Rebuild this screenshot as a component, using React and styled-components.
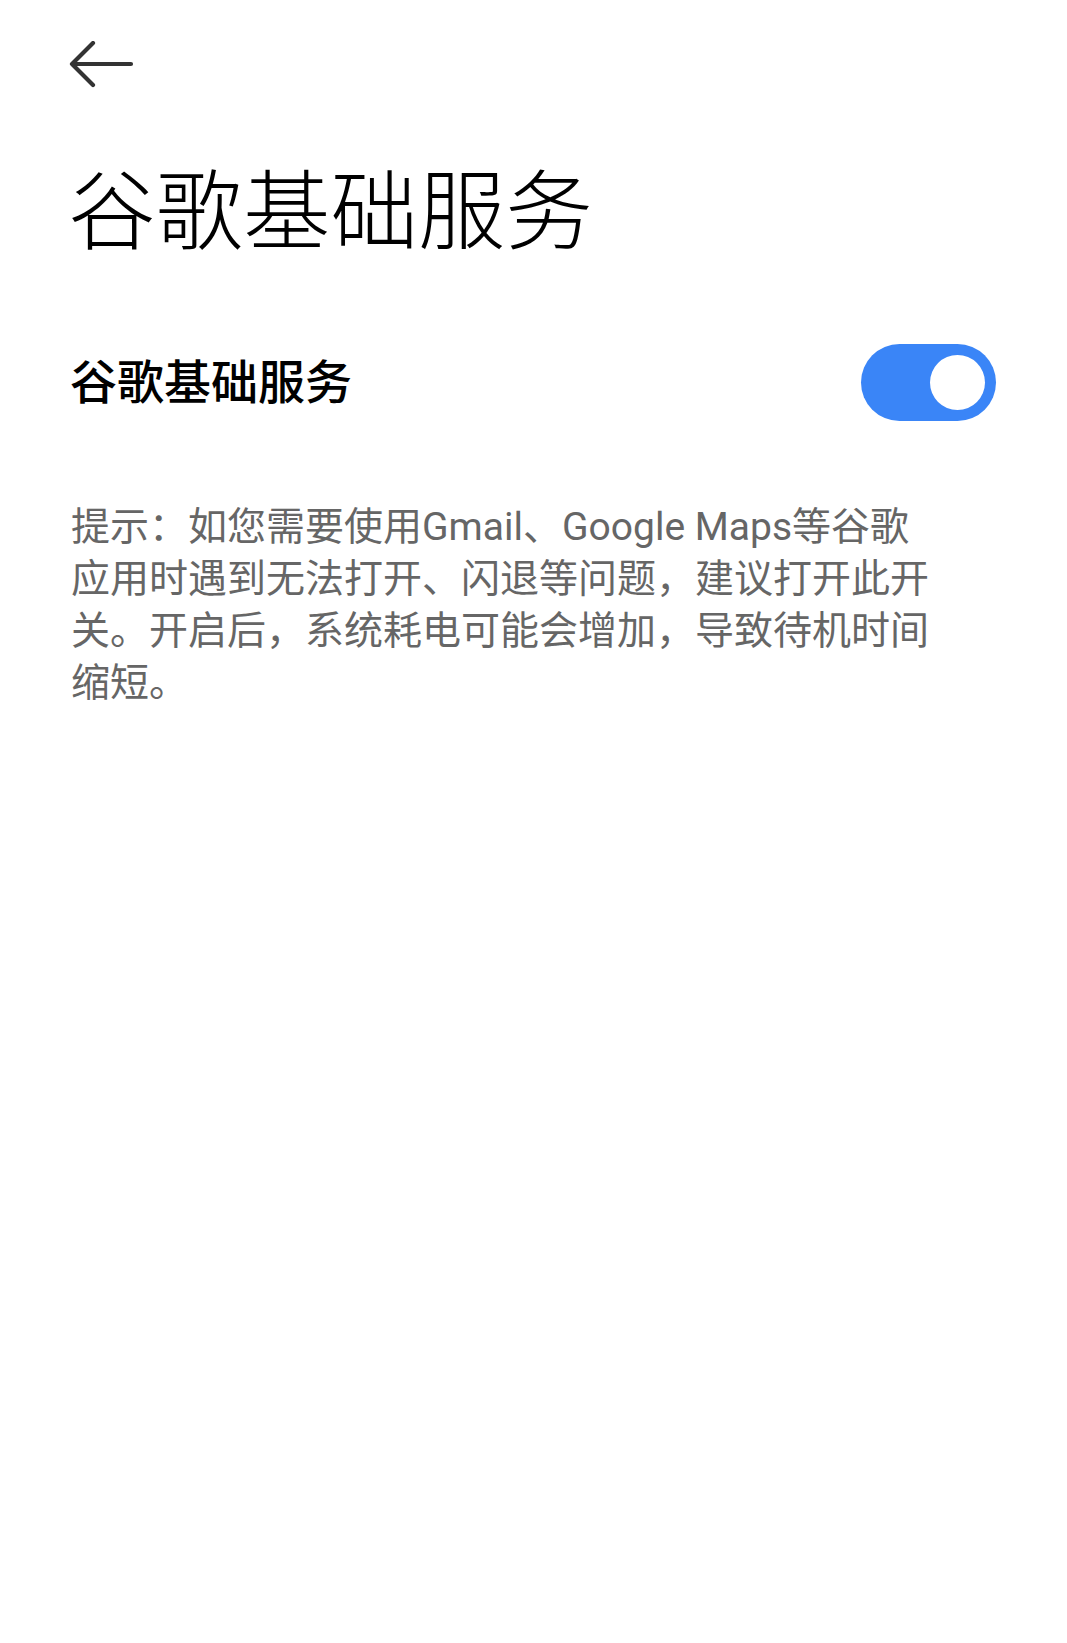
import React, { useState } from "react";
import styled, { createGlobalStyle } from "styled-components";

const GlobalStyle = createGlobalStyle`
  html, body {
    margin: 0;
    padding: 0;
    background: #ffffff;
  }
  body {
    font-family: "Noto Sans CJK SC", "Noto Sans", sans-serif;
    -webkit-font-smoothing: antialiased;
  }
`;

function App() {
  const [on, setOn] = useState(true);
  return (
    <Page>
      <GlobalStyle />
      <TopBar>
        <BackButton aria-label="返回">
          <svg width="66" height="48" viewBox="0 0 66 48" fill="none">
            <path
              d="M3 23 H62 M24 2 L3 23 L24 44"
              stroke="#333333"
              strokeWidth="4.2"
              strokeLinecap="round"
              strokeLinejoin="round"
            />
          </svg>
        </BackButton>
      </TopBar>
      <Title>谷歌基础服务</Title>
      <Row>
        <RowLabel>谷歌基础服务</RowLabel>
        <Switch $on={on} onClick={() => setOn(!on)}>
          <Knob $on={on} />
        </Switch>
      </Row>
      <Hint>
        提示：如您需要使用Gmail、Google Maps等谷歌应用时遇到无法打开、闪退等问题，建议打开此开关。开启后，系统耗电可能会增加，导致待机时间缩短。
      </Hint>
    </Page>
  );
}

const Page = styled.div`
  min-height: 1643px;
  box-sizing: border-box;
  padding: 0 71px;
  background: #ffffff;
`;

const TopBar = styled.div`
  height: 126px;
  display: flex;
  align-items: center;
`;

const BackButton = styled.button`
  border: none;
  background: transparent;
  padding: 0;
  margin-left: -2px;
  margin-top: 3px;
  display: flex;
  cursor: pointer;
`;

const Title = styled.h1`
  margin: 35px 0 0 -3px;
  font-size: 87.5px;
  line-height: 1;
  font-weight: 300;
  color: #000000;
`;

const Row = styled.div`
  margin-top: 95px;
  display: flex;
  align-items: center;
  justify-content: space-between;
`;

const RowLabel = styled.div`
  font-size: 47px;
  line-height: 1;
  font-weight: 500;
  color: #000000;
  margin-left: -1px;
  padding-bottom: 7px;
`;

const Switch = styled.button`
  width: 135px;
  height: 77px;
  border-radius: 39px;
  border: none;
  background: ${(p) => (p.$on ? "#3a85f7" : "#d9d9d9")};
  display: flex;
  align-items: center;
  justify-content: ${(p) => (p.$on ? "flex-end" : "flex-start")};
  padding: 0 11px;
  cursor: pointer;
`;

const Knob = styled.span`
  width: 55px;
  height: 55px;
  border-radius: 50%;
  background: #ffffff;
`;

const Hint = styled.p`
  margin: 80px 0 0;
  max-width: 875px;
  font-family: Roboto, "Noto Sans CJK SC", sans-serif;
  font-size: 39px;
  line-height: 52px;
  color: #666666;
  font-weight: 400;
`;

export default App;
